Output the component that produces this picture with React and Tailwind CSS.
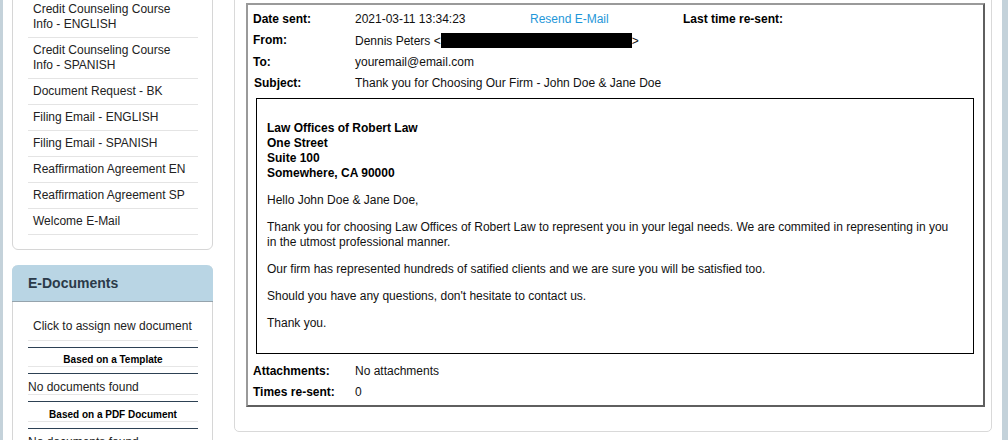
import React from "react";

const templates = [
  ["Credit Counseling Course", "Info - ENGLISH"],
  ["Credit Counseling Course", "Info - SPANISH"],
  ["Document Request - BK"],
  ["Filing Email - ENGLISH"],
  ["Filing Email - SPANISH"],
  ["Reaffirmation Agreement EN"],
  ["Reaffirmation Agreement SP"],
  ["Welcome E-Mail"],
];

const Row = ({ label, children }) => (
  <div className="flex h-[21px] items-center whitespace-nowrap">
    <div className="w-[102px] shrink-0 font-bold text-black">{label}</div>
    {children}
  </div>
);

const App = () => {
  return (
    <div
      className="flex h-[440px] w-[1008px] overflow-hidden bg-white text-[12px] leading-[15px] text-[#222]"
      style={{ fontFamily: '"Liberation Sans", Arial, sans-serif' }}
    >
      <div className="w-[3px] shrink-0 bg-[#c4d2da]" />

      <div className="flex flex-1 gap-[21px] pl-[9px] pr-[10px]">
        {/* sidebar */}
        <div className="-mt-[14px] flex w-[201px] shrink-0 flex-col gap-[15px]">
          <div className="rounded-b-[6px] border border-[#d6d6d6] pb-[14px] pl-[15px] pr-[14px] pt-[10px]">
            {templates.map((lines, i) => (
              <div
                key={i}
                className="border-b border-[#e4e4e4] px-[5px] py-[5px]"
              >
                {lines.map((l) => (
                  <div key={l}>{l}</div>
                ))}
              </div>
            ))}
          </div>

          <div className="flex-1 rounded-t-[6px] border-x border-[#d6d6d6]">
            <div className="-mx-px h-[37px] rounded-t-[6px] border-b border-[#96a4ad] bg-[#b9d5e4] pl-[16px] pt-[10px] text-[14px] font-bold leading-[17px] text-[#2b3a49]">
              E-Documents
            </div>
            <div className="pl-[15px] pr-[14px] pt-[11px]">
              <div className="border-b border-[#e6e6e6] px-[5px] py-[6px]">
                Click to assign new document
              </div>
              <div className="mt-[6px] border-y border-b-[#e6e6e6] border-t-[#2d4154] pt-[6px] text-center text-[10px] font-bold leading-[12px] text-black">
                Based on a Template
              </div>
              <div className="mt-[6px] h-[22px] border-y border-b-[#e6e6e6] border-t-[#2d4154] pt-[6px]">
                No documents found
              </div>
              <div className="mt-[6px] border-y border-b-[#e6e6e6] border-t-[#2d4154] pt-[7px] text-center text-[10px] font-bold leading-[12px] text-black">
                Based on a PDF Document
              </div>
              <div className="mt-[6px] border-t border-[#2d4154] pt-[6px]">
                No documents found
              </div>
            </div>
          </div>
        </div>

        {/* main */}
        <div className="-mt-[10px] flex-1 self-start rounded-b-[5px] border border-[#d9d9d9] pb-[24px] pl-[11px] pr-[6px] pt-[12px]">
          <div className="border-2 border-b-[#5f5f5f] border-l-[#9a9a9a] border-r-[#5f5f5f] border-t-[#9a9a9a] px-[5px] pb-[2px] pt-[4px] text-[#111]">
            <Row label="Date sent:">
              <div className="w-[175px]">2021-03-11 13:34:23</div>
              <div className="w-[153px] text-[#1f97d9]">Resend E-Mail</div>
              <div className="font-bold text-black">Last time re-sent:</div>
            </Row>
            <Row label="From:">
              <span className="pt-px">
                Dennis Peters &lt;
                <span className="inline-block h-[15px] w-[191px] bg-black align-[-3px]" />
                &gt;
              </span>
            </Row>
            <div className="mt-px">
              <Row label="To:">youremail@email.com</Row>
            </div>
            <Row label={<span className="pl-px">Subject:</span>}>
              Thank you for Choosing Our Firm - John Doe &amp; Jane Doe
            </Row>

            <div className="mb-[7px] ml-[3px] mr-[4px] mt-[4px] border border-black px-[10px] py-[10px]">
              <div className="my-[12px] font-bold text-black">
                Law Offices of Robert Law
                <br />
                One Street
                <br />
                Suite 100
                <br />
                Somewhere, CA 90000
              </div>
              <p className="my-[12px]">Hello John Doe &amp; Jane Doe,</p>
              <p className="my-[12px]">
                Thank you for choosing Law Offices of Robert Law to represent
                you in your legal needs. We are commited in representing in you
                <br />
                in the utmost professional manner.
              </p>
              <p className="my-[12px]">
                Our firm has represented hundreds of satified clients and we are
                sure you will be satisfied too.
              </p>
              <p className="my-[12px]">
                Should you have any questions, don't hesitate to contact us.
              </p>
              <p className="my-[12px]">Thank you.</p>
            </div>

            <div className="mt-px">
              <Row label="Attachments:">No attachments</Row>
            </div>
            <Row label="Times re-sent:">0</Row>
          </div>
        </div>
      </div>

      <div className="w-[6px] shrink-0 bg-[#c4d2da]" />
    </div>
  );
};

export default App;
